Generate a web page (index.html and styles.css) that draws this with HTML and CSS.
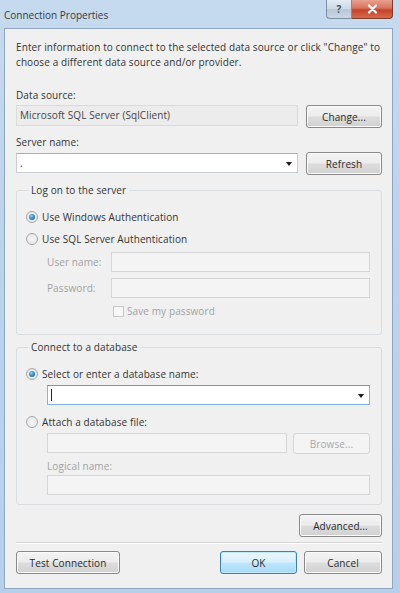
FILE: index.html
```html
<!DOCTYPE html>
<html>
<head>
<meta charset="utf-8">
<link rel="stylesheet" href="styles.css">
</head>
<body>
<div class="window">
  <div class="titlebar">
    <div class="title">Connection Properties</div>
    <div class="caption-buttons">
      <div class="cap-btn help">?</div>
      <div class="cap-btn close">
        <svg width="11" height="10" viewBox="0 0 11 10"><path d="M2 1.5 L9 8.5 M9 1.5 L2 8.5" stroke="#ffffff" stroke-width="2.2" stroke-linecap="round"/></svg>
      </div>
    </div>
  </div>
  <div class="client">
    <p class="desc">Enter information to connect to the selected data source or click "Change" to choose a different data source and/or provider.</p>

    <div class="label lbl-ds">Data source:</div>
    <div class="row row-ds">
      <div class="field readonly">Microsoft SQL Server (SqlClient)</div>
      <div class="btn">Change...</div>
    </div>

    <div class="label lbl-sn">Server name:</div>
    <div class="row row-sn">
      <div class="field combo">.<span class="arrow"></span></div>
      <div class="btn">Refresh</div>
    </div>

    <fieldset class="group group-logon">
      <legend>Log on to the server</legend>
      <div class="opt opt-first"><span class="radio checked"></span>Use Windows Authentication</div>
      <div class="opt opt-second"><span class="radio"></span>Use SQL Server Authentication</div>
      <div class="cred cred-user">
        <span class="dlabel">User name:</span>
        <div class="field disabled"></div>
      </div>
      <div class="cred cred-pass">
        <span class="dlabel">Password:</span>
        <div class="field disabled"></div>
      </div>
      <div class="save"><span class="check"></span>Save my password</div>
    </fieldset>

    <fieldset class="group group-db">
      <legend>Connect to a database</legend>
      <div class="opt opt-first"><span class="radio checked"></span>Select or enter a database name:</div>
      <div class="indent db-combo">
        <div class="field combo focus"><span class="caret"></span><span class="arrow"></span></div>
      </div>
      <div class="opt opt-attach"><span class="radio"></span>Attach a database file:</div>
      <div class="indent file-row">
        <div class="field disabled"></div>
        <div class="btn disabled-btn">Browse...</div>
      </div>
      <div class="indent dlabel logical">Logical name:</div>
      <div class="indent logical-field">
        <div class="field disabled"></div>
      </div>
    </fieldset>

    <div class="adv-row"><div class="btn adv">Advanced...</div></div>
    <div class="separator"></div>
    <div class="footer">
      <div class="btn test">Test Connection</div>
      <div class="btn ok">OK</div>
      <div class="btn cancel">Cancel</div>
    </div>
  </div>
</div>
</body>
</html>
```

FILE: styles.css
```css
* { box-sizing: border-box; }
html, body { margin: 0; padding: 0; }
body {
  width: 400px;
  height: 593px;
  overflow: hidden;
  font-family: "Open Sans", "DejaVu Sans", sans-serif;
  font-size: 10px;
  letter-spacing: 0.1px;
  color: #333333;
}
.window {
  width: 400px;
  height: 593px;
  display: flex;
  flex-direction: column;
  background: linear-gradient(180deg, #c6daef 0%, #bcd3ec 40%, #b7cfe9 100%);
}
.titlebar {
  height: 28px;
  display: flex;
  align-items: flex-start;
  flex-shrink: 0;
}
.title {
  padding: 8px 0 0 4px;
  font-size: 10px;
  letter-spacing: 0;
  color: #3a3a3a;
}
.caption-buttons {
  margin-left: auto;
  margin-right: 7px;
  display: flex;
  height: 19px;
}
.cap-btn {
  height: 19px;
  display: flex;
  align-items: center;
  justify-content: center;
  border: 1px solid #7d8ea3;
  border-top: none;
}
.help {
  width: 26px;
  border-radius: 0 0 0 4px;
  background: linear-gradient(180deg, #e4ecf5 0%, #cbd8e6 50%, #b8c8da 51%, #c9d6e4 100%);
  color: #46505c;
  font-size: 10px;
  font-weight: bold;
}
.close {
  width: 41px;
  border-left: none;
  border-color: #7a3a2c;
  border-radius: 0 0 4px 0;
  background: linear-gradient(180deg, #e9a090 0%, #d8735c 45%, #c5432a 55%, #d56a4c 100%);
}
.client {
  flex: 1;
  margin: 0 7px 4px 4px;
  background: #f0f0f0;
  border: 1px solid #8fa6c0;
  padding: 11px 10px 0 11px;
}
.desc {
  margin: 0;
  line-height: 15px;
}
.label { line-height: 14px; }
.lbl-ds { margin-top: 18px; }
.lbl-sn { margin-top: 7px; }
.row {
  display: grid;
  grid-template-columns: 1fr 76px;
  column-gap: 8px;
  align-items: start;
}
.row-ds { margin-top: 3px; }
.row-sn { margin-top: 3px; }
.row-sn .field { margin-top: 1px; }
.field {
  height: 21px;
  border: 1px solid #c9ced4;
  border-top-color: #abadb3;
  background: #ffffff;
  padding: 0 0 0 3px;
  line-height: 19px;
  position: relative;
}
.field.readonly {
  background: #ececec;
  border-color: #dadada;
  color: #444;
}
.field.combo { height: 20px; line-height: 18px; }
.field.disabled {
  height: 20px;
  background: #f4f4f4;
  border-color: #d6d6d6;
}
.field.focus {
  border-color: #7eb4ea;
  border-top-color: #569de5;
}
.arrow {
  position: absolute;
  right: 5px;
  top: 8px;
  width: 0;
  height: 0;
  border-left: 3.5px solid transparent;
  border-right: 3.5px solid transparent;
  border-top: 4px solid #1a1a1a;
}
.caret {
  display: inline-block;
  width: 1px;
  height: 12px;
  background: #222;
  margin-top: 3px;
  vertical-align: top;
}
.btn {
  height: 23px;
  border: 1px solid #8a8a8a;
  border-radius: 3px;
  background: linear-gradient(180deg, #f4f4f4 0%, #ececec 48%, #dddddd 52%, #d1d1d1 100%);
  box-shadow: inset 0 0 0 1px #fbfbfb;
  display: flex;
  align-items: center;
  justify-content: center;
  color: #2a2a2a;
}
.group {
  margin: 8px 0 0 0;
  padding: 12px 11px 16px 9px;
  border: 1px solid #d9dde0;
  border-radius: 3px;
  min-width: 0;
}
.group legend {
  padding: 0 3px;
  margin-left: 2px;
  line-height: 14px;
}
.group-db {
  margin-top: 5px;
  padding-bottom: 9px;
}
.opt {
  display: flex;
  align-items: center;
  height: 16px;
}
.opt-second { margin-top: 6px; }
.opt-attach { margin-top: 9px; }
.radio {
  width: 12px;
  height: 12px;
  border-radius: 50%;
  border: 1px solid #a3a7ab;
  background: radial-gradient(circle at 50% 50%, #f6f6f6 0%, #e3e3e3 100%);
  margin-right: 4px;
  display: flex;
  align-items: center;
  justify-content: center;
  flex-shrink: 0;
}
.radio.checked::after {
  content: "";
  width: 6px;
  height: 6px;
  border-radius: 50%;
  background: radial-gradient(circle at 40% 35%, #8fd0f2 0%, #2a83c1 55%, #1b5e93 100%);
}
.cred {
  display: grid;
  grid-template-columns: 64px 1fr;
  align-items: center;
  padding-left: 21px;
}
.cred-user { margin-top: 5px; }
.cred-pass { margin-top: 6px; }
.dlabel { color: #a2a2a2; }
.save {
  display: flex;
  align-items: center;
  height: 14px;
  margin-top: 6px;
  padding-left: 87px;
  color: #a2a2a2;
}
.check {
  width: 11px;
  height: 11px;
  border: 1px solid #c8c8c8;
  background: #f7f7f7;
  margin-right: 3px;
}
.indent { padding-left: 21px; }
.db-combo { margin-top: 3px; }
.file-row {
  display: grid;
  grid-template-columns: 1fr 77px;
  column-gap: 6px;
  align-items: start;
  margin-top: 3px;
}
.disabled-btn {
  height: 21px;
  background: #f4f4f4;
  border-color: #d5d5d5;
  box-shadow: none;
  color: #a8a8a8;
}
.logical {
  margin-top: 5px;
  line-height: 14px;
}
.logical-field { margin-top: 2px; }
.adv-row {
  display: flex;
  justify-content: flex-end;
  margin-top: 9px;
}
.adv { width: 83px; }
.separator {
  margin-top: 5px;
  height: 2px;
  border-top: 1px solid #d5d5d5;
  border-bottom: 1px solid #ffffff;
}
.footer {
  display: flex;
  margin-top: 7px;
}
.test { width: 104px; }
.ok {
  width: 77px;
  margin-left: auto;
  border-color: #3c7fb1;
  background: linear-gradient(180deg, #eaf6fd 0%, #d9f0fc 48%, #bee6fd 52%, #a7d9f5 100%);
  box-shadow: inset 0 0 0 1px #c0e8fb;
}
.cancel { width: 78px; margin-left: 7px; }
```
